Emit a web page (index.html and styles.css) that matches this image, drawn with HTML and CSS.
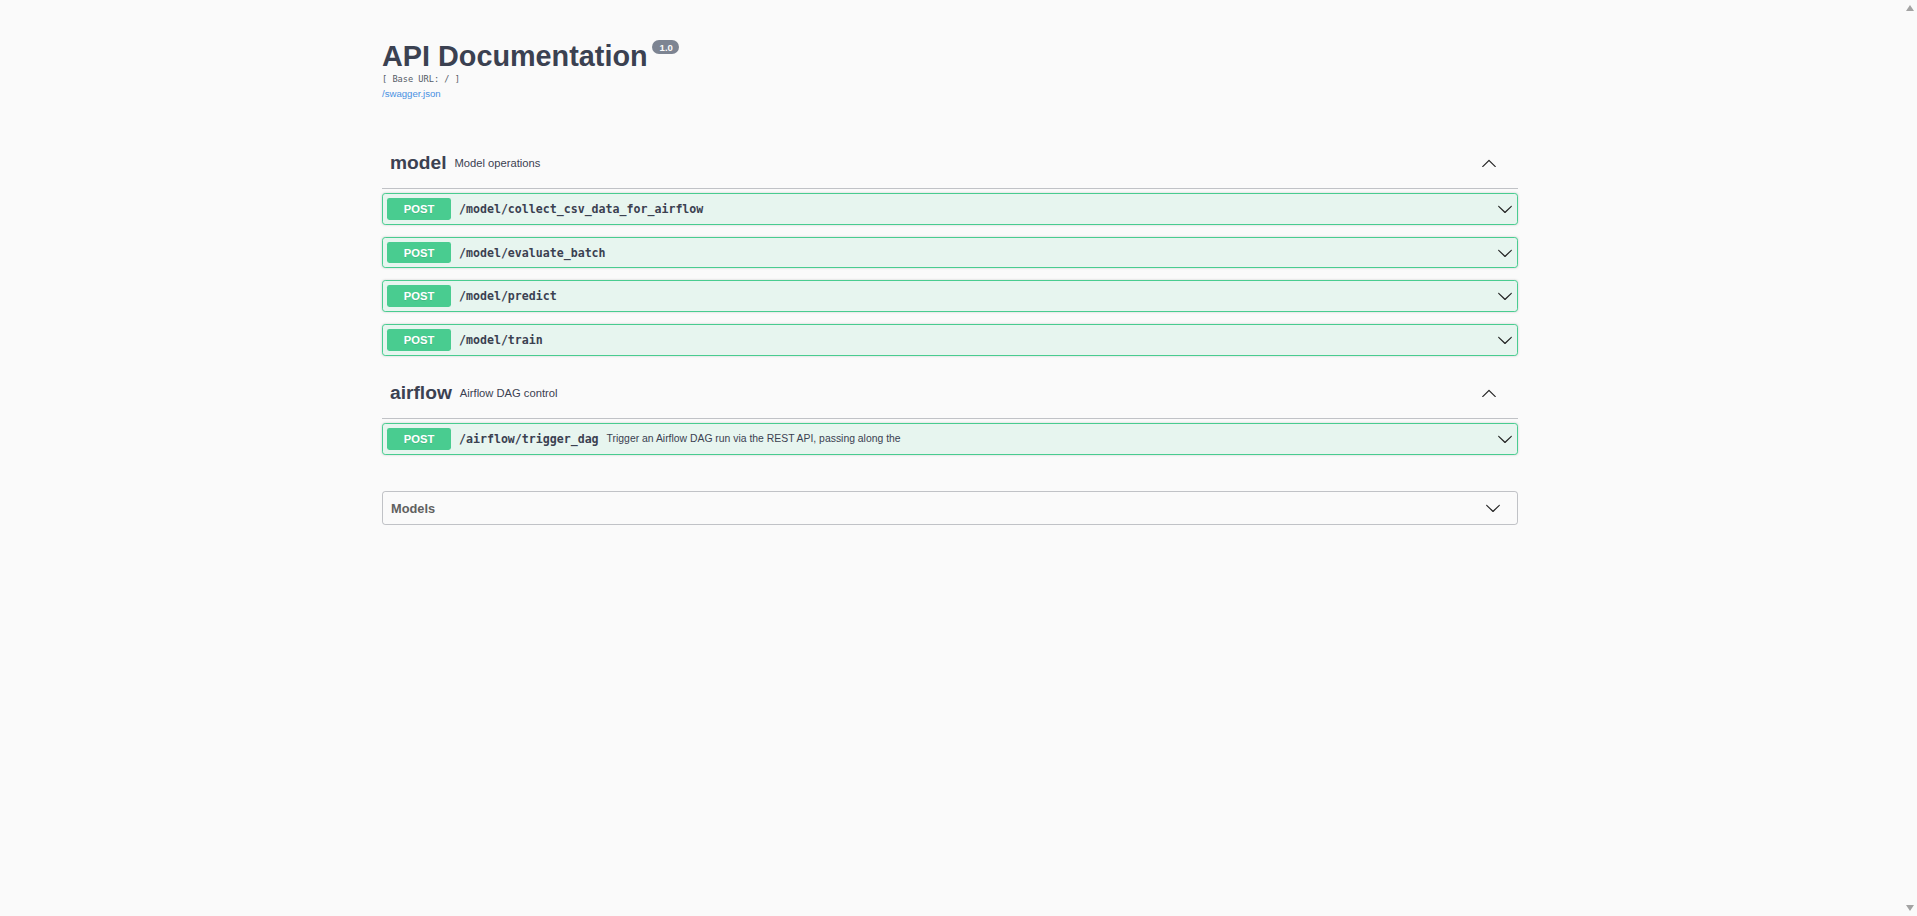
FILE: index.html
```html
<!DOCTYPE html>
<html lang="en">
<head>
<meta charset="utf-8">
<title>API Documentation</title>
<link rel="stylesheet" href="styles.css">
</head>
<body>
<div class="page">
  <div class="wrapper">
    <div class="info">
      <hgroup class="main">
        <h2 class="title">API Documentation<small class="version">1.0</small></h2>
        <pre class="base-url">[ Base URL: / ]</pre>
        <a class="spec-link" href="#">/swagger.json</a>
      </hgroup>
    </div>

    <div class="tag-section">
      <h3 class="opblock-tag">
        <span class="tag-name">model</span>
        <small class="tag-desc"><p>Model operations</p></small>
        <span class="expand-operation">
          <svg class="arrow" width="20" height="20" viewBox="0 0 20 20"><path d="M17.418 14.908c.272.268.709.268.979 0s.271-.701 0-.969l-7.908-7.83c-.27-.268-.707-.268-.979 0l-7.908 7.83c-.27.268-.27.701 0 .969.271.268.709.268.979 0L10 7.767l7.418 7.141z"/></svg>
        </span>
      </h3>
      <div class="ops">
        <div class="opblock">
          <div class="summary">
            <span class="method">POST</span>
            <span class="path">/model/collect_csv_data_for_airflow</span>
            <span class="desc"></span>
            <svg class="arrow" width="20" height="20" viewBox="0 0 20 20"><path d="M17.418 6.109c.272-.268.709-.268.979 0s.271.701 0 .969l-7.908 7.83c-.27.268-.707.268-.979 0l-7.908-7.83c-.27-.268-.27-.701 0-.969.271-.268.709-.268.979 0L10 13.25l7.418-7.141z"/></svg>
          </div>
        </div>
        <div class="opblock">
          <div class="summary">
            <span class="method">POST</span>
            <span class="path">/model/evaluate_batch</span>
            <span class="desc"></span>
            <svg class="arrow" width="20" height="20" viewBox="0 0 20 20"><path d="M17.418 6.109c.272-.268.709-.268.979 0s.271.701 0 .969l-7.908 7.83c-.27.268-.707.268-.979 0l-7.908-7.83c-.27-.268-.27-.701 0-.969.271-.268.709-.268.979 0L10 13.25l7.418-7.141z"/></svg>
          </div>
        </div>
        <div class="opblock">
          <div class="summary">
            <span class="method">POST</span>
            <span class="path">/model/predict</span>
            <span class="desc"></span>
            <svg class="arrow" width="20" height="20" viewBox="0 0 20 20"><path d="M17.418 6.109c.272-.268.709-.268.979 0s.271.701 0 .969l-7.908 7.83c-.27.268-.707.268-.979 0l-7.908-7.83c-.27-.268-.27-.701 0-.969.271-.268.709-.268.979 0L10 13.25l7.418-7.141z"/></svg>
          </div>
        </div>
        <div class="opblock">
          <div class="summary">
            <span class="method">POST</span>
            <span class="path">/model/train</span>
            <span class="desc"></span>
            <svg class="arrow" width="20" height="20" viewBox="0 0 20 20"><path d="M17.418 6.109c.272-.268.709-.268.979 0s.271.701 0 .969l-7.908 7.83c-.27.268-.707.268-.979 0l-7.908-7.83c-.27-.268-.27-.701 0-.969.271-.268.709-.268.979 0L10 13.25l7.418-7.141z"/></svg>
          </div>
        </div>
      </div>
    </div>

    <div class="tag-section">
      <h3 class="opblock-tag">
        <span class="tag-name">airflow</span>
        <small class="tag-desc"><p>Airflow DAG control</p></small>
        <span class="expand-operation">
          <svg class="arrow" width="20" height="20" viewBox="0 0 20 20"><path d="M17.418 14.908c.272.268.709.268.979 0s.271-.701 0-.969l-7.908-7.83c-.27-.268-.707-.268-.979 0l-7.908 7.83c-.27.268-.27.701 0 .969.271.268.709.268.979 0L10 7.767l7.418 7.141z"/></svg>
        </span>
      </h3>
      <div class="ops">
        <div class="opblock">
          <div class="summary">
            <span class="method">POST</span>
            <span class="path">/airflow/trigger_dag</span>
            <span class="desc">Trigger an Airflow DAG run via the REST API, passing along the</span>
            <svg class="arrow" width="20" height="20" viewBox="0 0 20 20"><path d="M17.418 6.109c.272-.268.709-.268.979 0s.271.701 0 .969l-7.908 7.83c-.27.268-.707.268-.979 0l-7.908-7.83c-.27-.268-.27-.701 0-.969.271-.268.709-.268.979 0L10 13.25l7.418-7.141z"/></svg>
          </div>
        </div>
      </div>
    </div>

    <section class="models">
      <h4 class="models-head">
        <span class="models-title">Models</span>
        <svg class="arrow" width="20" height="20" viewBox="0 0 20 20"><path d="M17.418 6.109c.272-.268.709-.268.979 0s.271.701 0 .969l-7.908 7.83c-.27.268-.707.268-.979 0l-7.908-7.83c-.27-.268-.27-.701 0-.969.271-.268.709-.268.979 0L10 13.25l7.418-7.141z"/></svg>
      </h4>
    </section>
  </div>
</div>
<div class="scroll-arrow up"></div>
<div class="scroll-arrow down"></div>
</body>
</html>
```

FILE: styles.css
```css
html, body {
  margin: 0;
  padding: 0;
  background: #fafafa;
}

body {
  padding-right: 17px;
  font-family: "Liberation Sans", Arial, sans-serif;
  color: #3b4151;
}

.page {
  zoom: 0.8;
}

.wrapper {
  box-sizing: border-box;
  max-width: 1460px;
  margin: 0 auto;
  padding: 0 20px;
  width: 100%;
}

.info {
  margin: 50px 0 46px;
}

.main {
  margin: 0;
  display: block;
}

.title {
  display: flex;
  align-items: flex-start;
  margin: 0;
  font-size: 36px;
  font-weight: 700;
  color: #3b4151;
  line-height: normal;
}

.version {
  background: #7d8492;
  border-radius: 57px;
  color: #fafafa;
  font-size: 12px;
  font-weight: 700;
  line-height: 14px;
  padding: 2px 8px 2px 9px;
  margin-left: 6px;
}

.base-url {
  margin: 0;
  font-family: "DejaVu Sans Mono", "Liberation Mono", monospace;
  font-size: 10.8px;
  color: #555a66;
  line-height: 16px;
}

.spec-link {
  display: block;
  font-size: 12px;
  color: #4990e2;
  text-decoration: none;
  line-height: 16px;
  padding-top: 3px;
}

.tag-section {
  display: flex;
  flex-direction: column;
}

.opblock-tag {
  display: flex;
  align-items: center;
  padding: 10px 20px 10px 10px;
  margin: 0 0 5px;
  border-bottom: 1px solid rgba(59, 65, 81, 0.3);
  font-size: 24px;
  font-weight: 700;
  color: #3b4151;
}

.tag-desc {
  flex: 2;
  font-size: 14px;
  font-weight: 400;
  padding: 0 10px;
  color: #3b4151;
}

.tag-desc p {
  margin: 14px 0;
}

.expand-operation {
  display: flex;
  padding: 1px 6px;
}

.arrow {
  width: 20px;
  height: 20px;
  fill: #222;
  flex: none;
}

.opblock {
  border: 1px solid #49cc90;
  border-radius: 4px;
  background: rgba(73, 204, 144, 0.1);
  box-shadow: 0 0 3px rgba(0, 0, 0, 0.19);
  margin: 0 0 15px;
}

.summary {
  display: flex;
  align-items: center;
  padding: 5px;
}

.method {
  background: #49cc90;
  border-radius: 3px;
  color: #fff;
  font-size: 14px;
  font-weight: 700;
  min-width: 80px;
  padding: 6px 0;
  text-align: center;
  text-shadow: 0 1px 0 rgba(0, 0, 0, 0.1);
}

.path {
  font-family: "DejaVu Sans Mono", "Liberation Mono", monospace;
  font-weight: 700;
  font-size: 14.5px;
  color: #3b4151;
  padding: 0 10px;
}

.desc {
  flex: 1;
  font-size: 13px;
  color: #3b4151;
}

.models {
  border: 1px solid rgba(59, 65, 81, 0.3);
  border-radius: 4px;
  margin: 31px 0 30px;
}

.models-head {
  display: flex;
  align-items: center;
  margin: 0;
  padding: 10px 20px 10px 10px;
  font-size: 16px;
  font-weight: 700;
  color: #606060;
}

.models-title {
  flex: 1;
}

.scroll-arrow {
  position: fixed;
  right: 3px;
  width: 0;
  height: 0;
  border-left: 4.5px solid transparent;
  border-right: 4.5px solid transparent;
}

.scroll-arrow.up {
  top: 5px;
  border-bottom: 6px solid #a3a3a3;
}

.scroll-arrow.down {
  bottom: 5px;
  border-top: 6px solid #a3a3a3;
}
```
